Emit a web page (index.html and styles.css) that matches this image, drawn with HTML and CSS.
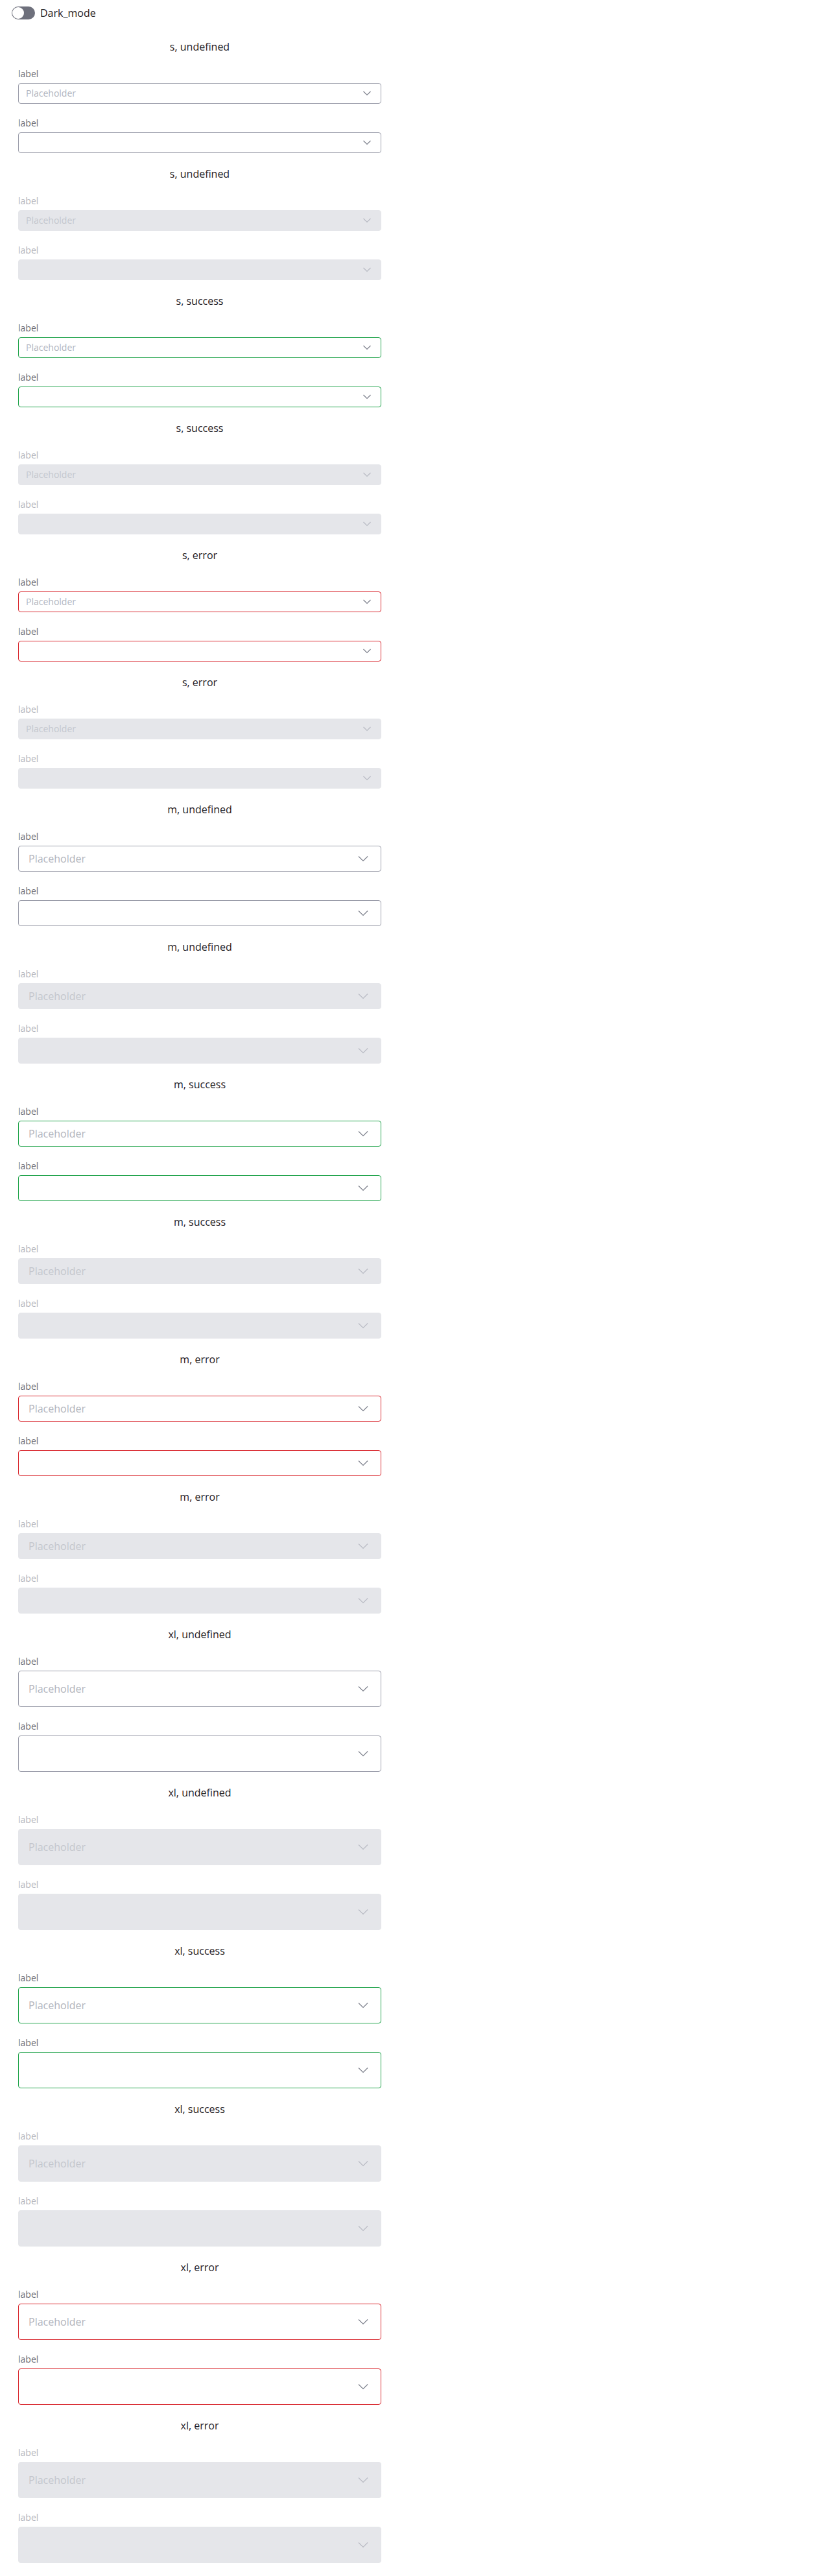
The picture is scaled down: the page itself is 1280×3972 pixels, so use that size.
FILE: index.html
```html
<!DOCTYPE html>
<html lang="en">
<head>
<meta charset="utf-8">
<title>Select</title>
<link rel="stylesheet" href="styles.css">
</head>
<body>
<div class="topbar">
  <span class="toggle"><span class="knob"></span></span>
  <span class="toggle-label">Dark_mode</span>
</div>
<main class="stories">

  <section class="story s">
    <h2 class="title">s, undefined</h2>
    <div class="field"><div class="label">label</div><div class="select"><span class="ph">Placeholder</span><svg class="chev" viewBox="0 0 12 12"><path d="M0.5 3 L6 8.5 L11.5 3"/></svg></div></div>
    <div class="field"><div class="label">label</div><div class="select"><span class="ph"></span><svg class="chev" viewBox="0 0 12 12"><path d="M0.5 3 L6 8.5 L11.5 3"/></svg></div></div>
  </section>
  <section class="story s disabled">
    <h2 class="title">s, undefined</h2>
    <div class="field"><div class="label">label</div><div class="select"><span class="ph">Placeholder</span><svg class="chev" viewBox="0 0 12 12"><path d="M0.5 3 L6 8.5 L11.5 3"/></svg></div></div>
    <div class="field"><div class="label">label</div><div class="select"><span class="ph"></span><svg class="chev" viewBox="0 0 12 12"><path d="M0.5 3 L6 8.5 L11.5 3"/></svg></div></div>
  </section>
  <section class="story s success">
    <h2 class="title">s, success</h2>
    <div class="field"><div class="label">label</div><div class="select"><span class="ph">Placeholder</span><svg class="chev" viewBox="0 0 12 12"><path d="M0.5 3 L6 8.5 L11.5 3"/></svg></div></div>
    <div class="field"><div class="label">label</div><div class="select"><span class="ph"></span><svg class="chev" viewBox="0 0 12 12"><path d="M0.5 3 L6 8.5 L11.5 3"/></svg></div></div>
  </section>
  <section class="story s success disabled">
    <h2 class="title">s, success</h2>
    <div class="field"><div class="label">label</div><div class="select"><span class="ph">Placeholder</span><svg class="chev" viewBox="0 0 12 12"><path d="M0.5 3 L6 8.5 L11.5 3"/></svg></div></div>
    <div class="field"><div class="label">label</div><div class="select"><span class="ph"></span><svg class="chev" viewBox="0 0 12 12"><path d="M0.5 3 L6 8.5 L11.5 3"/></svg></div></div>
  </section>
  <section class="story s error">
    <h2 class="title">s, error</h2>
    <div class="field"><div class="label">label</div><div class="select"><span class="ph">Placeholder</span><svg class="chev" viewBox="0 0 12 12"><path d="M0.5 3 L6 8.5 L11.5 3"/></svg></div></div>
    <div class="field"><div class="label">label</div><div class="select"><span class="ph"></span><svg class="chev" viewBox="0 0 12 12"><path d="M0.5 3 L6 8.5 L11.5 3"/></svg></div></div>
  </section>
  <section class="story s error disabled">
    <h2 class="title">s, error</h2>
    <div class="field"><div class="label">label</div><div class="select"><span class="ph">Placeholder</span><svg class="chev" viewBox="0 0 12 12"><path d="M0.5 3 L6 8.5 L11.5 3"/></svg></div></div>
    <div class="field"><div class="label">label</div><div class="select"><span class="ph"></span><svg class="chev" viewBox="0 0 12 12"><path d="M0.5 3 L6 8.5 L11.5 3"/></svg></div></div>
  </section>

  <section class="story m">
    <h2 class="title">m, undefined</h2>
    <div class="field"><div class="label">label</div><div class="select"><span class="ph">Placeholder</span><svg class="chev" viewBox="0 0 16 16"><path d="M1 4.5 L8 11.5 L15 4.5"/></svg></div></div>
    <div class="field"><div class="label">label</div><div class="select"><span class="ph"></span><svg class="chev" viewBox="0 0 16 16"><path d="M1 4.5 L8 11.5 L15 4.5"/></svg></div></div>
  </section>
  <section class="story m disabled">
    <h2 class="title">m, undefined</h2>
    <div class="field"><div class="label">label</div><div class="select"><span class="ph">Placeholder</span><svg class="chev" viewBox="0 0 16 16"><path d="M1 4.5 L8 11.5 L15 4.5"/></svg></div></div>
    <div class="field"><div class="label">label</div><div class="select"><span class="ph"></span><svg class="chev" viewBox="0 0 16 16"><path d="M1 4.5 L8 11.5 L15 4.5"/></svg></div></div>
  </section>
  <section class="story m success">
    <h2 class="title">m, success</h2>
    <div class="field"><div class="label">label</div><div class="select"><span class="ph">Placeholder</span><svg class="chev" viewBox="0 0 16 16"><path d="M1 4.5 L8 11.5 L15 4.5"/></svg></div></div>
    <div class="field"><div class="label">label</div><div class="select"><span class="ph"></span><svg class="chev" viewBox="0 0 16 16"><path d="M1 4.5 L8 11.5 L15 4.5"/></svg></div></div>
  </section>
  <section class="story m success disabled">
    <h2 class="title">m, success</h2>
    <div class="field"><div class="label">label</div><div class="select"><span class="ph">Placeholder</span><svg class="chev" viewBox="0 0 16 16"><path d="M1 4.5 L8 11.5 L15 4.5"/></svg></div></div>
    <div class="field"><div class="label">label</div><div class="select"><span class="ph"></span><svg class="chev" viewBox="0 0 16 16"><path d="M1 4.5 L8 11.5 L15 4.5"/></svg></div></div>
  </section>
  <section class="story m error">
    <h2 class="title">m, error</h2>
    <div class="field"><div class="label">label</div><div class="select"><span class="ph">Placeholder</span><svg class="chev" viewBox="0 0 16 16"><path d="M1 4.5 L8 11.5 L15 4.5"/></svg></div></div>
    <div class="field"><div class="label">label</div><div class="select"><span class="ph"></span><svg class="chev" viewBox="0 0 16 16"><path d="M1 4.5 L8 11.5 L15 4.5"/></svg></div></div>
  </section>
  <section class="story m error disabled">
    <h2 class="title">m, error</h2>
    <div class="field"><div class="label">label</div><div class="select"><span class="ph">Placeholder</span><svg class="chev" viewBox="0 0 16 16"><path d="M1 4.5 L8 11.5 L15 4.5"/></svg></div></div>
    <div class="field"><div class="label">label</div><div class="select"><span class="ph"></span><svg class="chev" viewBox="0 0 16 16"><path d="M1 4.5 L8 11.5 L15 4.5"/></svg></div></div>
  </section>

  <section class="story xl">
    <h2 class="title">xl, undefined</h2>
    <div class="field"><div class="label">label</div><div class="select"><span class="ph">Placeholder</span><svg class="chev" viewBox="0 0 16 16"><path d="M1 4.5 L8 11.5 L15 4.5"/></svg></div></div>
    <div class="field"><div class="label">label</div><div class="select"><span class="ph"></span><svg class="chev" viewBox="0 0 16 16"><path d="M1 4.5 L8 11.5 L15 4.5"/></svg></div></div>
  </section>
  <section class="story xl disabled">
    <h2 class="title">xl, undefined</h2>
    <div class="field"><div class="label">label</div><div class="select"><span class="ph">Placeholder</span><svg class="chev" viewBox="0 0 16 16"><path d="M1 4.5 L8 11.5 L15 4.5"/></svg></div></div>
    <div class="field"><div class="label">label</div><div class="select"><span class="ph"></span><svg class="chev" viewBox="0 0 16 16"><path d="M1 4.5 L8 11.5 L15 4.5"/></svg></div></div>
  </section>
  <section class="story xl success">
    <h2 class="title">xl, success</h2>
    <div class="field"><div class="label">label</div><div class="select"><span class="ph">Placeholder</span><svg class="chev" viewBox="0 0 16 16"><path d="M1 4.5 L8 11.5 L15 4.5"/></svg></div></div>
    <div class="field"><div class="label">label</div><div class="select"><span class="ph"></span><svg class="chev" viewBox="0 0 16 16"><path d="M1 4.5 L8 11.5 L15 4.5"/></svg></div></div>
  </section>
  <section class="story xl success disabled">
    <h2 class="title">xl, success</h2>
    <div class="field"><div class="label">label</div><div class="select"><span class="ph">Placeholder</span><svg class="chev" viewBox="0 0 16 16"><path d="M1 4.5 L8 11.5 L15 4.5"/></svg></div></div>
    <div class="field"><div class="label">label</div><div class="select"><span class="ph"></span><svg class="chev" viewBox="0 0 16 16"><path d="M1 4.5 L8 11.5 L15 4.5"/></svg></div></div>
  </section>
  <section class="story xl error">
    <h2 class="title">xl, error</h2>
    <div class="field"><div class="label">label</div><div class="select"><span class="ph">Placeholder</span><svg class="chev" viewBox="0 0 16 16"><path d="M1 4.5 L8 11.5 L15 4.5"/></svg></div></div>
    <div class="field"><div class="label">label</div><div class="select"><span class="ph"></span><svg class="chev" viewBox="0 0 16 16"><path d="M1 4.5 L8 11.5 L15 4.5"/></svg></div></div>
  </section>
  <section class="story xl error disabled">
    <h2 class="title">xl, error</h2>
    <div class="field"><div class="label">label</div><div class="select"><span class="ph">Placeholder</span><svg class="chev" viewBox="0 0 16 16"><path d="M1 4.5 L8 11.5 L15 4.5"/></svg></div></div>
    <div class="field"><div class="label">label</div><div class="select"><span class="ph"></span><svg class="chev" viewBox="0 0 16 16"><path d="M1 4.5 L8 11.5 L15 4.5"/></svg></div></div>
  </section>

</main>
</body>
</html>
```
FILE: styles.css
```css
* { box-sizing: border-box; }

body {
  margin: 8px;
  background: #ffffff;
  font-family: "Open Sans", "Noto Sans", sans-serif;
  color: #1f2024;
}

.topbar {
  display: flex;
  align-items: center;
  gap: 8px;
  height: 24px;
  padding-left: 10px;
  margin-bottom: 28px;
}

.toggle {
  display: flex;
  align-items: center;
  width: 36px;
  height: 20px;
  padding: 1px;
  border-radius: 10px;
  background: #6e707c;
}

.knob {
  width: 18px;
  height: 18px;
  border-radius: 50%;
  background: #ffffff;
}

.toggle-label {
  font-size: 16px;
  line-height: 24px;
  color: #1f2024;
}

.stories {
  width: 560px;
  margin-left: 20px;
  display: flex;
  flex-direction: column;
}

.story {
  display: flex;
  flex-direction: column;
  gap: 20px;
  padding-bottom: 20px;
}

.title {
  margin: 0;
  font-size: 16px;
  line-height: 24px;
  font-weight: 400;
  text-align: center;
  color: #1f2024;
}

.field {
  display: flex;
  flex-direction: column;
  gap: 4px;
}

.label {
  font-size: 14px;
  line-height: 20px;
  color: #6c6e79;
}

.select {
  display: flex;
  align-items: center;
  justify-content: space-between;
  border: 1px solid #9b9daa;
  border-radius: 4px;
  background: #ffffff;
}

.ph {
  color: #b2b4bc;
}

.chev {
  display: block;
  fill: none;
  stroke: #7d808c;
  stroke-width: 1.2;
}

/* sizes */
.s .select {
  height: 32px;
  padding: 0 15px 0 11px;
}
.s .ph { font-size: 14px; line-height: 20px; }
.s .chev { width: 12px; height: 12px; }

.m .select {
  height: 40px;
  padding: 0 19px 0 15px;
}
.m .ph { font-size: 16px; line-height: 24px; }
.m .chev { width: 16px; height: 16px; }

.xl .select {
  height: 56px;
  padding: 0 19px 0 15px;
}
.xl .ph { font-size: 16px; line-height: 24px; }
.xl .chev { width: 16px; height: 16px; }

/* status */
.success .select { border-color: #1fa34a; }
.error .select { border-color: #d9272e; }

/* disabled */
.disabled .label { color: #b4b6be; }
.disabled .select {
  background: #e5e6ea;
  border-color: #e5e6ea;
}
.disabled .ph { color: #c4c6cd; }
.disabled .chev { stroke: #b9bbc4; }
```
